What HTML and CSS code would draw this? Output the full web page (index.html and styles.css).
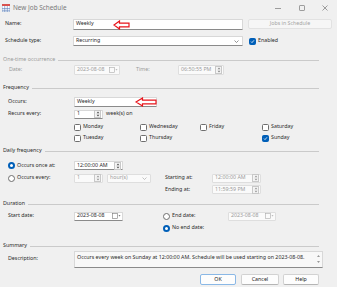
FILE: index.html
```html
<!DOCTYPE html>
<html>
<head>
<meta charset="utf-8">
<link rel="stylesheet" href="styles.css">
</head>
<body>
<div class="win">
  <div class="titlebar">
    <svg class="appicon" width="8" height="8" viewBox="0 0 8 8">
      <rect x="0" y="0" width="8" height="8" fill="#fff" stroke="#5a7fb8" stroke-width="0.6"/>
      <rect x="0" y="0" width="8" height="2" fill="#d9534f"/>
      <path d="M0 4.5H8M0 6.3H8M2.7 2V8M5.3 2V8" stroke="#5a7fb8" stroke-width="0.6"/>
    </svg>
    <span class="title">New Job Schedule</span>
    <div class="winctl">
      <span class="wc"><svg width="6" height="6" viewBox="0 0 6 6"><path d="M0 3.5H6" stroke="#777" stroke-width="0.7"/></svg></span>
      <span class="wc"><svg width="6" height="6" viewBox="0 0 6 6"><rect x="0.5" y="0.5" width="5" height="5" rx="0.6" fill="none" stroke="#777" stroke-width="0.7"/></svg></span>
      <span class="wc"><svg width="6" height="6" viewBox="0 0 6 6"><path d="M0.5 0.5L5.5 5.5M5.5 0.5L0.5 5.5" stroke="#777" stroke-width="0.7"/></svg></span>
    </div>
  </div>

  <div class="row top r-name">
    <span class="lbl">Name:</span>
    <div class="inp w-name h11">Weekly
      <svg class="redarrow ra1" width="17" height="10" viewBox="0 0 17 10"><path d="M1 5L6.5 1V3.2H16V6.8H6.5V9Z" fill="#fff" stroke="#e8141b" stroke-width="1.2" stroke-linejoin="miter"/></svg>
    </div>
    <button class="btn jobs" disabled>Jobs in Schedule</button>
  </div>

  <div class="row top r-type">
    <span class="lbl">Schedule type:</span>
    <div class="inp w-name">Recurring<span class="chev"><svg width="5" height="3" viewBox="0 0 5 3"><path d="M0.5 0.5L2.5 2.5L4.5 0.5" fill="none" stroke="#666" stroke-width="0.7"/></svg></span></div>
    <span class="cb on enabled"><svg width="5" height="5" viewBox="0 0 5 5"><path d="M1 2.6L2 3.6L4 1.3" fill="none" stroke="#fff" stroke-width="0.8"/></svg></span>
    <span>Enabled</span>
  </div>

  <div class="gh dis r-onetime">One-time occurrence</div>
  <div class="row sec r-date dis-text">
    <span class="lbl">Date:</span>
    <div class="inp dis w-date1">2023-08-08<span class="cal"><svg width="9" height="6" viewBox="0 0 9 6"><rect x="0.5" y="0.5" width="5" height="5" fill="none" stroke="#aaa" stroke-width="0.6"/><path d="M6.5 2.3H8.5L7.5 3.5Z" fill="#aaa"/></svg></span></div>
    <span class="time-lbl">Time:</span>
    <div class="inp dis w-time1">06:50:55 PM<span class="spin"><svg width="4" height="6" viewBox="0 0 4 6"><path d="M2 0.6L3.4 2.3H0.6Z M2 5.4L3.4 3.7H0.6Z" fill="#888"/></svg></span></div>
  </div>

  <div class="gh r-freq">Frequency</div>
  <div class="row sec r-occurs">
    <span class="lbl">Occurs:</span>
    <div class="inp w-occurs">Weekly<span class="chev"><svg width="5" height="3" viewBox="0 0 5 3"><path d="M0.5 0.5L2.5 2.5L4.5 0.5" fill="none" stroke="#666" stroke-width="0.7"/></svg></span>
      <svg class="redarrow ra2" width="22" height="10" viewBox="0 0 22 10"><path d="M1 5L7.5 1V3.2H21V6.8H7.5V9Z" fill="#fff" stroke="#e8141b" stroke-width="1.2"/></svg>
    </div>
  </div>
  <div class="row sec r-recurs">
    <span class="lbl">Recurs every:</span>
    <div class="inp w-spin">1<span class="spin"><svg width="4" height="6" viewBox="0 0 4 6"><path d="M2 0.6L3.4 2.3H0.6Z M2 5.4L3.4 3.7H0.6Z" fill="#555"/></svg></span></div>
    <span class="after">week(s) on</span>
  </div>
  <div class="days">
    <span class="day"><span class="cb"></span>Monday</span>
    <span class="day"><span class="cb"></span>Wednesday</span>
    <span class="day"><span class="cb"></span>Friday</span>
    <span class="day"><span class="cb"></span>Saturday</span>
    <span class="day"><span class="cb"></span>Tuesday</span>
    <span class="day"><span class="cb"></span>Thursday</span>
    <span class="day"></span>
    <span class="day"><span class="cb on"><svg width="5" height="5" viewBox="0 0 5 5"><path d="M1 2.6L2 3.6L4 1.3" fill="none" stroke="#fff" stroke-width="0.8"/></svg></span>Sunday</span>
  </div>

  <div class="gh r-daily">Daily frequency</div>
  <div class="row sec r-once">
    <span class="lbl"><span class="rb on"></span>Occurs once at:</span>
    <div class="inp w-time">12:00:00 AM<span class="spin"><svg width="4" height="6" viewBox="0 0 4 6"><path d="M2 0.6L3.4 2.3H0.6Z M2 5.4L3.4 3.7H0.6Z" fill="#555"/></svg></span></div>
  </div>
  <div class="row sec r-every">
    <span class="lbl"><span class="rb"></span>Occurs every:</span>
    <div class="inp dis w-spin">1<span class="spin"><svg width="4" height="6" viewBox="0 0 4 6"><path d="M2 0.6L3.4 2.3H0.6Z M2 5.4L3.4 3.7H0.6Z" fill="#999"/></svg></span></div>
    <div class="inp dis w-hours">hour(s)<span class="chev"><svg width="5" height="3" viewBox="0 0 5 3"><path d="M0.5 0.5L2.5 2.5L4.5 0.5" fill="none" stroke="#aaa" stroke-width="0.7"/></svg></span></div>
    <span class="sub-lbl start">Starting at:</span>
    <div class="inp dis w-time">12:00:00 AM<span class="spin"><svg width="4" height="6" viewBox="0 0 4 6"><path d="M2 0.6L3.4 2.3H0.6Z M2 5.4L3.4 3.7H0.6Z" fill="#999"/></svg></span></div>
  </div>
  <div class="row r-ending">
    <span class="sub-lbl">Ending at:</span>
    <div class="inp dis w-time">11:59:59 PM<span class="spin"><svg width="4" height="6" viewBox="0 0 4 6"><path d="M2 0.6L3.4 2.3H0.6Z M2 5.4L3.4 3.7H0.6Z" fill="#999"/></svg></span></div>
  </div>

  <div class="gh r-duration">Duration</div>
  <div class="row sec r-start">
    <span class="lbl">Start date:</span>
    <div class="inp w-time">2023-08-08<span class="cal"><svg width="9" height="6" viewBox="0 0 9 6"><rect x="0.5" y="0.5" width="5" height="5" fill="none" stroke="#777" stroke-width="0.6"/><path d="M6.5 2.3H8.5L7.5 3.5Z" fill="#555"/></svg></span></div>
    <span class="end-lbl"><span class="rb"></span>End date:</span>
    <div class="inp dis w-date2">2023-08-08<span class="cal"><svg width="9" height="6" viewBox="0 0 9 6"><rect x="0.5" y="0.5" width="5" height="5" fill="none" stroke="#aaa" stroke-width="0.6"/><path d="M6.5 2.3H8.5L7.5 3.5Z" fill="#aaa"/></svg></span></div>
  </div>
  <div class="row r-noend">
    <span class="rb on"></span>No end date:
  </div>

  <div class="gh r-summary">Summary</div>
  <div class="row sec r-desc">
    <span class="lbl desc-lbl">Description:</span>
    <div class="textarea">Occurs every week on Sunday at 12:00:00 AM. Schedule will be used starting on 2023-08-08.
      <span class="scroll"><svg width="3" height="2" viewBox="0 0 3 2"><path d="M1.5 0L3 2H0Z" fill="#999"/></svg><svg width="3" height="2" viewBox="0 0 3 2"><path d="M1.5 2L3 0H0Z" fill="#999"/></svg></span>
    </div>
  </div>

  <div class="row r-buttons">
    <button class="btn ok">OK</button>
    <button class="btn cancel">Cancel</button>
    <button class="btn help">Help</button>
  </div>
</div>
</body>
</html>
```

FILE: styles.css
```css
html, body {
  margin: 0;
  padding: 0;
}
body {
  background: #f0f0f0;
  font-family: "Noto Sans", "DejaVu Sans", sans-serif;
  font-size: 5.3px;
  line-height: 1;
  color: #2a2a2a;
}
.win {
  width: 337px;
  height: 287px;
  overflow: hidden;
  position: relative;
}

/* title bar */
.titlebar {
  height: 16px;
  display: flex;
  align-items: center;
  padding-left: 2px;
  box-sizing: border-box;
}
.appicon { flex: none; margin-right: 3px; }
.title { color: #7a7a7a; font-size: 6.4px; }
.winctl { margin-left: auto; display: flex; height: 16px; }
.wc { width: 23.5px; display: flex; align-items: center; justify-content: center; }

/* rows */
.row { display: flex; align-items: center; box-sizing: border-box; }
.top { padding-left: 5px; }
.top .lbl { width: 68px; }
.sec { padding-left: 8px; }
.sec .lbl { width: 66px; }
.lbl { flex: none; display: flex; align-items: center; }

.r-name { margin-top: 2px; height: 12px; }
.r-type { margin-top: 5px; height: 12px; }
.r-onetime { margin-top: 9px; }
.r-date { margin-top: 0; height: 11px; padding-left: 9px; }
.r-date .lbl { width: 65px; }
.r-freq { margin-top: 9px; }
.r-occurs { margin-top: 4px; height: 11px; }
.r-recurs { margin-top: 2px; height: 10px; }
.r-daily { margin-top: 4px; }
.r-once { margin-top: 5px; height: 11px; }
.r-every { margin-top: 2px; height: 10px; }
.r-ending { margin-top: 1px; height: 11px; padding-left: 165px; }
.r-duration { margin-top: 5px; }
.r-start { margin-top: 3px; height: 10px; }
.r-noend { margin-top: 2px; height: 10px; padding-left: 163px; }
.r-summary { margin-top: 9px; }
.r-desc { margin-top: 1px; height: 17px; align-items: flex-start; }
.r-buttons { margin-top: 6px; height: 11px; padding-left: 200px; }

.dis-text, .dis { color: #9a9a9a; }

/* group headers */
.gh {
  display: flex;
  align-items: center;
  height: 8px;
  padding-left: 3px;
  padding-right: 18px;
}
.gh::after {
  content: "";
  flex: 1;
  border-top: 1px solid #cacaca;
  margin-left: 3px;
}

/* inputs */
.inp {
  box-sizing: border-box;
  flex: none;
  height: 9px;
  background: #fff;
  border: 1px solid #d8d8d8;
  border-bottom-color: #8a8a8a;
  border-radius: 1px;
  display: flex;
  align-items: center;
  padding: 0 1px 0 2px;
  position: relative;
}
.inp.dis {
  background: #fafafa;
  border-color: #dedede;
  color: #9a9a9a;
}
.w-name { width: 170px; height: 10px; }
.r-name .w-name { height: 11px; }
.w-date1 { width: 46px; height: 10px; }
.w-time1 { width: 46px; height: 10px; }
.w-occurs { width: 83px; height: 10px; }
.w-spin { width: 29px; }
.w-time { width: 49px; }
.w-hours { width: 44px; margin-left: 4px; }
.w-date2 { width: 48px; }

.chev { margin-left: auto; margin-right: 2px; display: flex; }
.spin {
  margin-left: auto;
  width: 5px;
  height: 6px;
  border: 1px solid #c8c8c8;
  background: #f4f4f4;
  display: flex;
  align-items: center;
  justify-content: center;
}
.cal { margin-left: auto; display: flex; }

.time-lbl { width: 42px; margin-left: 16px; flex: none; }
.after { margin-left: 3px; }
.sub-lbl { width: 47px; flex: none; }
.sub-lbl.start { margin-left: 14px; }
.end-lbl { margin-left: 40px; width: 65px; display: flex; align-items: center; flex: none; }

/* red annotation arrows */
.redarrow { position: absolute; }
.ra1 { left: 39px; top: 0; }
.ra2 { left: 60px; top: -1px; }

/* checkboxes, radios */
.cb {
  box-sizing: border-box;
  flex: none;
  width: 7px;
  height: 7px;
  border: 1px solid #6e6e6e;
  border-radius: 1.5px;
  background: #fff;
  margin-right: 2px;
  display: flex;
  align-items: center;
  justify-content: center;
}
.cb.on { background: #005fb8; border-color: #005fb8; }
.cb.enabled { margin-left: 6px; }
.rb {
  box-sizing: border-box;
  flex: none;
  width: 7px;
  height: 7px;
  border-radius: 50%;
  border: 1px solid #6e6e6e;
  background: #fff;
  margin-right: 2px;
}
.rb.on { border: 2px solid #005fb8; }

.days {
  display: grid;
  grid-template-columns: 66px 60px 62px auto;
  grid-auto-rows: 10px;
  row-gap: 1px;
  padding-left: 74px;
  margin-top: 3px;
}
.day { display: flex; align-items: center; }

/* summary */
.desc-lbl { padding-top: 5px; }
.textarea {
  box-sizing: border-box;
  width: 249px;
  height: 17px;
  background: #f8f8f8;
  border: 1px solid #d8d8d8;
  border-bottom-color: #8a8a8a;
  padding: 3px 2px;
  position: relative;
  flex: none;
}
.scroll {
  position: absolute;
  right: 2px;
  top: 3px;
  display: flex;
  flex-direction: column;
  gap: 4px;
}

/* buttons */
.btn {
  font: inherit;
  box-sizing: border-box;
  height: 11px;
  padding: 0;
  border: 1px solid #d2d2d2;
  border-bottom-color: #b5b5b5;
  border-radius: 2px;
  background: #fdfdfd;
  color: #1b1b1b;
  flex: none;
}
.btn.jobs {
  width: 84px;
  height: 10px;
  margin-left: 5px;
  background: #f6f6f6;
  border-color: #e2e2e2;
  color: #a3a3a3;
}
.btn.ok { width: 36px; border-color: #8ab8e6; }
.btn.cancel { width: 38px; margin-left: 5px; }
.btn.help { width: 36px; margin-left: 4px; }
```
